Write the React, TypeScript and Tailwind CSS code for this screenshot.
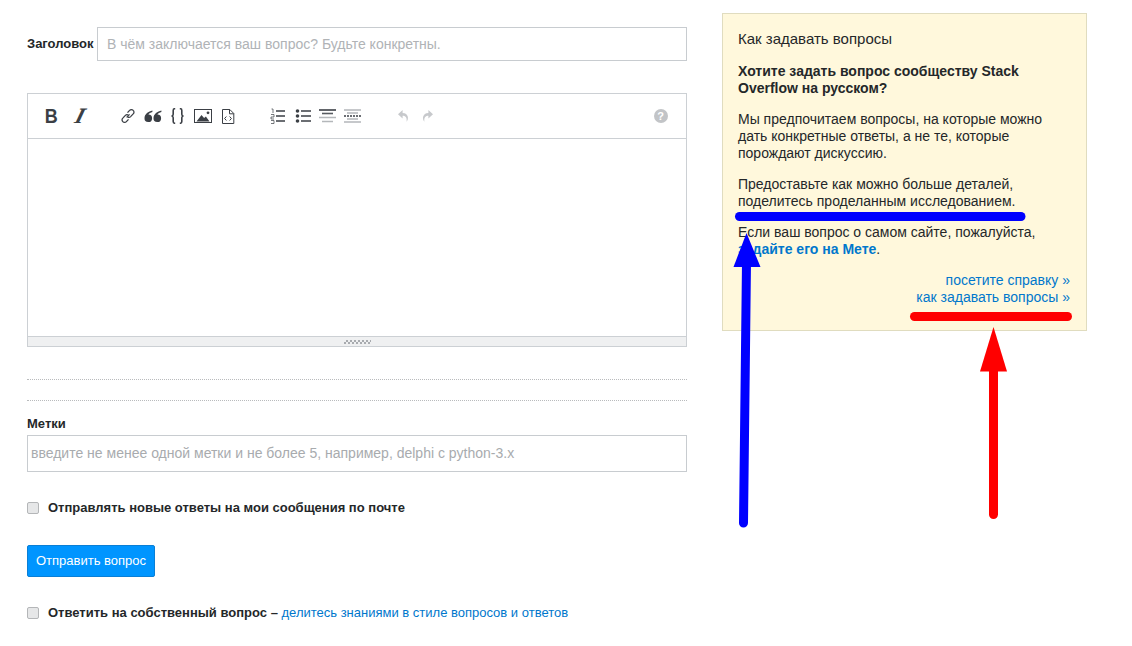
import type { ReactNode } from "react";

function ToolButton({ children }: { children: ReactNode }) {
  return (
    <span className="flex h-[20px] w-[25px] items-center justify-center">
      {children}
    </span>
  );
}

function Icon({ children, w = 18, h = 18 }: { children: ReactNode; w?: number; h?: number }) {
  return (
    <svg width={w} height={h} viewBox={`0 0 ${w} ${h}`} fill="none">
      {children}
    </svg>
  );
}

const ink = "#3b3f45";
const pale = "#b4b7ba";

function Toolbar() {
  return (
    <div className="flex h-[45px] items-center border-b border-[#ccd0d4]">
      <div className="ml-[11px] flex gap-[4px]">
        <ToolButton>
          <span className="scale-x-[.9] text-[20px] leading-none font-bold text-[#3b3f45]">B</span>
        </ToolButton>
        <ToolButton>
          <span className="-skew-x-[25deg] font-['Liberation_Serif',serif] text-[22px] leading-none font-bold text-[#3b3f45]">I</span>
        </ToolButton>
      </div>
      <div className="ml-[22px] flex">
        <ToolButton>
          <Icon w={16} h={16}>
            <path d="M6.6 9.4 9.6 6.4" stroke={ink} strokeWidth="1.2" />
            <path d="M7.5 4.6 9.6 2.4a2.4 2.4 0 0 1 3.6 0 2.4 2.4 0 0 1 0 3.5L10.6 8.6a2.4 2.4 0 0 1-3 .3" stroke={ink} strokeWidth="1.3" />
            <path d="M8.5 11.4 6.4 13.6a2.4 2.4 0 0 1-3.6 0 2.4 2.4 0 0 1 0-3.5L5.4 7.4a2.4 2.4 0 0 1 3-.3" stroke={ink} strokeWidth="1.3" />
          </Icon>
        </ToolButton>
        <ToolButton>
          <Icon w={18} h={14}>
            <path d="M8.400 1.500C4.500 2.400.5 5 .5 9.200a3.800 3.800 0 1 0 3.900-3.700C5 4.400 6.600 3.400 8.400 3Z" fill={ink} />
            <path d="M17.400 1.500C13.500 2.400 9.500 5 9.500 9.200a3.800 3.800 0 1 0 3.900-3.700c.6-1.100 2.200-2.100 4-2.500Z" fill={ink} />
          </Icon>
        </ToolButton>
        <ToolButton>
          <Icon w={13} h={16}>
            <path d="M4.200 .8H3.400C2.400.8 2.200 1.500 2.200 2.400v3.800C2.200 7.200 1.600 7.800.6 8c1 .2 1.600.8 1.600 1.800v3.800c0 .9.2 1.600 1.200 1.600h.8" stroke={ink} strokeWidth="1.6" />
            <path d="M8.800 .8h.8c1 0 1.200.7 1.200 1.600v3.800c0 1 .6 1.600 1.600 1.800-1 .2-1.600.8-1.600 1.800v3.800c0 .9-.2 1.600-1.200 1.600h-.8" stroke={ink} strokeWidth="1.6" />
          </Icon>
        </ToolButton>
        <ToolButton>
          <Icon w={18} h={14}>
            <rect x=".5" y=".5" width="17" height="13" stroke={ink} />
            <path d="M2.500 12.500 7.500 6l2.600 3 1.800-1.400 3.600 4.900Z" fill={ink} />
            <circle cx="14" cy="3.800" r="1.400" fill={ink} />
          </Icon>
        </ToolButton>
        <ToolButton>
          <Icon w={14} h={15}>
            <path d="M1.500.5h7.300l4 4v10h-11.300Z" stroke={ink} />
            <path d="M8.500.5v4.300h4.300" stroke={ink} />
            <path d="M5.400 7.500 3.600 9.500l1.800 2M8.600 7.500l1.800 2-1.800 2" stroke={ink} />
          </Icon>
        </ToolButton>
      </div>
      <div className="ml-[25px] flex">
        <ToolButton>
          <Icon w={16} h={16}>
            <path d="M6 3h9M6 8h9M6 13h9" stroke={ink} strokeWidth="1.5" />
            <path d="M1.500 1h1.500v4M1 6.500h3v2.500H1v2h3M1 12.500h3v3H1" stroke={ink} strokeWidth=".7" />
          </Icon>
        </ToolButton>
        <ToolButton>
          <Icon w={16} h={14}>
            <circle cx="2.500" cy="2" r="1.800" fill={ink} />
            <circle cx="2.500" cy="7" r="1.800" fill={ink} />
            <circle cx="2.500" cy="12" r="1.800" fill={ink} />
            <path d="M6 2h10M6 7h10M6 12h10" stroke={ink} strokeWidth="1.5" />
          </Icon>
        </ToolButton>
        <ToolButton>
          <Icon w={17} h={14}>
            <path d="M0 1h17" stroke={ink} strokeWidth="1.6" />
            <path d="M3 4.500h11" stroke={ink} strokeWidth="1.6" opacity=".85" />
            <path d="M0 8.500h17M3 12.500h11" stroke={pale} strokeWidth="1.6" />
          </Icon>
        </ToolButton>
        <ToolButton>
          <Icon w={17} h={14}>
            <path d="M0 1h17M3 4h11M3 10h11M0 13h17" stroke={pale} strokeWidth="1.4" />
            <path d="M0 7h17" stroke={ink} strokeWidth="1.6" strokeDasharray="2 1" />
          </Icon>
        </ToolButton>
      </div>
      <div className="ml-[25px] flex">
        <ToolButton>
          <Icon w={12} h={14}>
            <path d="M4.600 0 0 4.200l4.600 4.200V5.800c2.600 0 4.600 1.200 4 6 2.400-3 2-8.400-4-8.800Z" fill="#c7c9cc" transform="translate(1 1)" />
          </Icon>
        </ToolButton>
        <ToolButton>
          <Icon w={12} h={14}>
            <path d="M7.400 0 12 4.200 7.400 8.400V5.800c-2.600 0-4.600 1.200-4 6-2.400-3-2-8.400 4-8.800Z" fill="#c7c9cc" transform="translate(-1 1)" />
          </Icon>
        </ToolButton>
      </div>
      <div className="mr-[13px] ml-auto">
        <ToolButton>
          <span className="flex h-[14px] w-[14px] items-center justify-center rounded-full bg-[#c2c4c7] text-[11px] leading-none font-bold text-white">?</span>
        </ToolButton>
      </div>
    </div>
  );
}

function Editor() {
  return (
    <div className="mt-[32px] border border-[#ccd0d4]">
      <Toolbar />
      <div className="h-[197px] bg-white" />
      <div className="flex h-[10px] items-center justify-center border-t border-[#ccd0d4] bg-[#eff0f1]">
        <span className="h-[4px] w-[27px] bg-[repeating-conic-gradient(#a8abaf_0_25%,#eff0f1_0_50%)] bg-[length:4px_4px]" />
      </div>
    </div>
  );
}

function CheckRow({ children, className }: { children: ReactNode; className: string }) {
  return (
    <div className={`flex items-center ${className}`}>
      <span className="h-[12px] w-[12px] rounded-[2px] border border-[#b4b6b8] bg-[#e6e7e8]" />
      <span className="ml-[9px] text-[13px] leading-[16px] font-bold text-[#242729]">{children}</span>
    </div>
  );
}

function Sidebar() {
  return (
    <aside className="mt-[13px] ml-[35px] h-[318px] w-[365px] border border-[#e0dcbf] bg-[#fff8dc] pt-[16px] pr-[16px] pl-[15px] text-[14px] leading-[17px] text-[#242729]">
      <p className="text-[15px]">Как задавать вопросы</p>
      <p className="mt-[16px] font-bold">
        Хотите задать вопрос сообществу Stack
        <br />
        Overflow на русском?
      </p>
      <p className="mt-[14px]">
        Мы предпочитаем вопросы, на которые можно
        <br />
        дать конкретные ответы, а не те, которые
        <br />
        порождают дискуссию.
      </p>
      <p className="mt-[14px]">
        Предоставьте как можно больше деталей,
        <br />
        поделитесь проделанным исследованием.
      </p>
      <p className="mt-[14px]">
        Если ваш вопрос о самом сайте, пожалуйста,
        <br />
        <span className="font-bold text-[#0077cc]">задайте его на Мете</span>.
      </p>
      <p className="mt-[14px] text-right text-[#0077cc]">
        посетите справку »
        <br />
        как задавать вопросы »
      </p>
    </aside>
  );
}

// the hand-drawn arrows sit on top of the page
function Annotations() {
  return (
    <svg className="pointer-events-none absolute top-0 left-0" width="1132" height="646" viewBox="0 0 1132 646" fill="none">
      <path d="M739.5 216.5H1021" stroke="#0000ff" strokeWidth="9" strokeLinecap="round" />
      <path d="M746.5 262 743.5 523" stroke="#0000ff" strokeWidth="9" strokeLinecap="round" />
      <path d="M746.5 233 760.5 267H733.5Z" fill="#0000ff" />
      <path d="M914.5 316.5H1067.5" stroke="#ff0000" strokeWidth="9" strokeLinecap="round" />
      <path d="M993.5 365V514.5" stroke="#ff0000" strokeWidth="9" strokeLinecap="round" />
      <path d="M993.5 327 1007 371.5H980Z" fill="#ff0000" />
    </svg>
  );
}

export default function App() {
  return (
    <div className="relative h-[646px] w-[1132px] overflow-hidden bg-white font-['Liberation_Sans',Arial,sans-serif]">
      <div className="flex pl-[27px]">
        <main className="w-[660px] pt-[27px]">
          <div className="flex items-center">
            <label className="w-[70px] text-[13px] font-bold text-[#242729]">Заголовок</label>
            <div className="flex h-[34px] flex-1 items-center border border-[#c8ccd0] pl-[9px] text-[14px] text-[#b0b3b6]">
              В чём заключается ваш вопрос? Будьте конкретны.
            </div>
          </div>
          <Editor />
          <div className="mt-[32px] h-[22px] border-y border-dotted border-[#b9bbbd]" />
          <label className="mt-[15px] block text-[13px] leading-[16px] font-bold text-[#242729]">Метки</label>
          <div className="mt-[3px] flex h-[37px] items-center border border-[#c8ccd0] pl-[3px] text-[14px] text-[#a8abae]">
            введите не менее одной метки и не более 5, например, delphi c python-3.x
          </div>
          <CheckRow className="mt-[28px]">Отправлять новые ответы на мои сообщения по почте</CheckRow>
          <button className="mt-[29px] flex h-[32px] w-[128px] items-center justify-center rounded-[2px] border border-[#0a7fd6] bg-[#0095ff] text-[13px] text-white">
            Отправить вопрос
          </button>
          <CheckRow className="mt-[28px]">
            Ответить на собственный вопрос –{" "}
            <span className="font-normal text-[#0077cc]">делитесь знаниями в стиле вопросов и ответов</span>
          </CheckRow>
        </main>
        <Sidebar />
      </div>
      <Annotations />
    </div>
  );
}
